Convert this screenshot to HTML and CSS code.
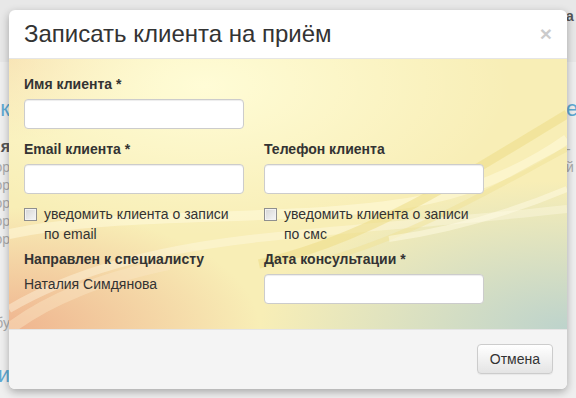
FILE: index.html
```html
<!DOCTYPE html>
<html lang="ru">
<head>
  <meta charset="UTF-8" />
  <meta name="viewport" content="width=device-width, initial-scale=1.0"/>
  <title>Записать клиента на приём</title>
  <link rel="stylesheet" href="styles.css">
</head>
<body>

<!-- page behind the dialog -->
<div class="page">
  <div class="page-top">
    <div class="edge-left"></div>
    <div class="edge-right"><span class="t-dark">а</span></div>
  </div>
  <div class="page-main">
    <div class="edge-left">
      <div class="line t-blue t-big l1"><span>ик</span></div>
      <div class="line t-dark l2"><span>я</span></div>
      <div class="line t-grey"><span>ор</span></div>
      <div class="line t-grey"><span>ор</span></div>
      <div class="line t-grey"><span>ор</span></div>
      <div class="line t-grey"><span>ор</span></div>
      <div class="line t-grey"><span>ор</span></div>
      <div class="line t-grey l3"><span>бу</span></div>
      <div class="line t-blue t-big l4"><span>ти</span></div>
    </div>
    <div class="spacer"></div>
    <div class="edge-right">
      <div class="t-blue t-big l1">е</div>
      <div class="t-grey l5">-</div>
      <div class="t-grey">й</div>
    </div>
  </div>
</div>

<!-- dialog -->
<div class="modal">
  <div class="modal-header">
    <span class="close">&times;</span>
    <h4 class="modal-title">Записать клиента на приём</h4>
  </div>

  <div class="modal-body">
    <svg class="modal-bg" viewBox="0 0 558 270" preserveAspectRatio="none">
      <defs>
        <radialGradient id="hiLight" cx="0.35" cy="0.1" r="0.55">
          <stop offset="0" stop-color="#fffcd6"/>
          <stop offset="1" stop-color="#fffcd6" stop-opacity="0"/>
        </radialGradient>
        <radialGradient id="orange" cx="0" cy="1" r="0.45">
          <stop offset="0" stop-color="#efb48f"/>
          <stop offset="1" stop-color="#efb48f" stop-opacity="0"/>
        </radialGradient>
        <radialGradient id="topLeft" cx="0" cy="0" r="0.3">
          <stop offset="0" stop-color="#f5d9a6"/>
          <stop offset="1" stop-color="#f5d9a6" stop-opacity="0"/>
        </radialGradient>
        <radialGradient id="green" cx="1" cy="1" r="0.55">
          <stop offset="0" stop-color="#bdd3cc"/>
          <stop offset="1" stop-color="#bdd3cc" stop-opacity="0"/>
        </radialGradient>
      </defs>
      <rect width="558" height="270" fill="#f8eeb6"/>
      <rect width="558" height="270" fill="url(#topLeft)"/>
      <rect width="558" height="270" fill="url(#hiLight)"/>
      <rect width="558" height="270" fill="url(#orange)"/>
      <rect width="558" height="270" fill="url(#green)"/>
      <path d="M0 175 C120 150 300 165 420 140 C480 128 530 100 558 80" fill="none" stroke="#fffbe0" stroke-width="10" opacity="0.5"/>
      <path d="M0 250 C60 215 140 190 260 178 C380 166 470 160 558 150" fill="none" stroke="#fffbe6" stroke-width="8" opacity="0.4"/>
      <path d="M250 205 C360 180 450 120 558 55" fill="none" stroke="#eddc86" stroke-width="9" opacity="0.55"/>
      <path d="M320 200 C420 170 500 120 558 90" fill="none" stroke="#efe196" stroke-width="5" opacity="0.5"/>
      <path d="M380 180 C450 170 510 150 558 130" fill="none" stroke="#fffbe6" stroke-width="6" opacity="0.5"/>
      <path d="M0 270 C40 240 90 220 160 205" fill="none" stroke="#fbe6c6" stroke-width="12" opacity="0.45"/>
    </svg>

    <form class="form">
      <div class="form-row">
        <div class="form-group">
          <label class="control-label">Имя клиента *</label>
          <input type="text" class="form-control" />
        </div>
      </div>

      <div class="form-row">
        <div class="form-group">
          <label class="control-label">Email клиента *</label>
          <input type="text" class="form-control" />
        </div>
        <div class="form-group">
          <label class="control-label">Телефон клиента</label>
          <input type="text" class="form-control" />
        </div>
      </div>

      <div class="form-row">
        <label class="checkbox"><input type="checkbox" /> уведомить клиента о записи по email</label>
        <label class="checkbox"><input type="checkbox" /> уведомить клиента о записи по смс</label>
      </div>

      <div class="form-row">
        <div class="form-group">
          <label class="control-label">Направлен к специалисту</label>
          <p class="form-static">Наталия Симдянова</p>
        </div>
        <div class="form-group">
          <label class="control-label">Дата консультации *</label>
          <input type="text" class="form-control" />
        </div>
      </div>
    </form>
  </div>

  <div class="modal-footer">
    <button type="button" class="btn">Отмена</button>
  </div>
</div>

</body>
</html>
```

FILE: styles.css
```css
body {
  margin: 0;
  font-family: "Liberation Sans", Arial, sans-serif;
  font-size: 14px;
  line-height: 20px;
  color: #333;
  background: #efefef;
  overflow: hidden;
}

/* page behind the dialog */
.page {
  height: 398px;
}

.page-top {
  height: 62px;
  background: #e8e8e8;
  display: flex;
  justify-content: space-between;
}

.page-main {
  display: flex;
}

.spacer {
  flex: 1;
}

.edge-left {
  width: 10px;
  overflow: hidden;
}

.edge-left .line {
  display: flex;
  justify-content: flex-end;
  white-space: nowrap;
}

.edge-left .line span {
  flex-shrink: 0;
}

.edge-right {
  width: 10px;
  padding-left: 568px;
  margin-left: -568px;
  overflow: hidden;
  white-space: nowrap;
}

.page-top .edge-right {
  padding-top: 6px;
}

.t-blue { color: #5ea9d3; }
.t-dark { color: #555; font-weight: bold; }
.t-grey { color: #aaa; line-height: 18px; }
.t-big { font-size: 22px; line-height: 26px; }

.l1 { margin-top: 34px; }
.l2 { margin-top: 14px; line-height: 22px; font-size: 16px; }
.l3 { margin-top: 66px; }
.l4 { margin-top: 30px; }
.l5 { margin-top: 18px; }

/* dialog */
.modal {
  position: absolute;
  top: 10px;
  left: 9px;
  width: 558px;
  background: #fff;
  border-radius: 6px;
  box-shadow: 0 3px 9px rgba(0,0,0,0.3);
  overflow: hidden;
}

.modal-header {
  padding: 11px 15px;
  border-bottom: 1px solid #e5e5e5;
}

.modal-title {
  margin: 0;
  font-size: 24px;
  font-weight: normal;
  line-height: 26px;
  color: #333;
}

.close {
  float: right;
  font-size: 21px;
  font-weight: bold;
  line-height: 26px;
  color: #000;
  opacity: 0.2;
  cursor: pointer;
}

.modal-body {
  position: relative;
  height: 270px;
  box-sizing: border-box;
  padding: 15px 15px;
}

.modal-bg {
  position: absolute;
  left: 0;
  top: 0;
  width: 100%;
  height: 100%;
}

.form {
  position: relative;
}

.form-row {
  display: grid;
  grid-template-columns: 220px 220px;
  column-gap: 20px;
}

.form-group {
  margin-bottom: 10px;
}

.control-label {
  display: block;
  margin-bottom: 5px;
  font-weight: bold;
}

.form-control {
  display: block;
  width: 100%;
  height: 30px;
  box-sizing: border-box;
  padding: 5px 10px;
  font: inherit;
  background: #fff;
  border: 1px solid #ccc;
  border-radius: 4px;
  box-shadow: inset 0 1px 1px rgba(0,0,0,0.075);
}

.form-static {
  margin: 0;
}

.checkbox {
  display: block;
  position: relative;
  padding-left: 20px;
  margin-bottom: 5px;
}

.checkbox input {
  position: absolute;
  left: 0;
  top: 4px;
  margin: 0;
  width: 13px;
  height: 13px;
  appearance: none;
  -webkit-appearance: none;
  border: 1px solid #8f8f8f;
  background: linear-gradient(135deg, #d6d6d6, #f6f6f6);
  box-shadow: inset 0 0 0 1px #f2f2f2;
}

.modal-footer {
  padding: 14px 14px 15px;
  border-top: 1px solid #e5e5e5;
  background: #f4f4f4;
  text-align: right;
}

.btn {
  font: inherit;
  color: #333;
  padding: 4px 12px;
  height: 30px;
  border: 1px solid #ccc;
  border-radius: 4px;
  background: linear-gradient(#ffffff, #e4e4e4);
  box-shadow: 0 1px 1px rgba(0,0,0,0.05);
  cursor: pointer;
}

.btn:hover {
  background: #e6e6e6;
}
```
